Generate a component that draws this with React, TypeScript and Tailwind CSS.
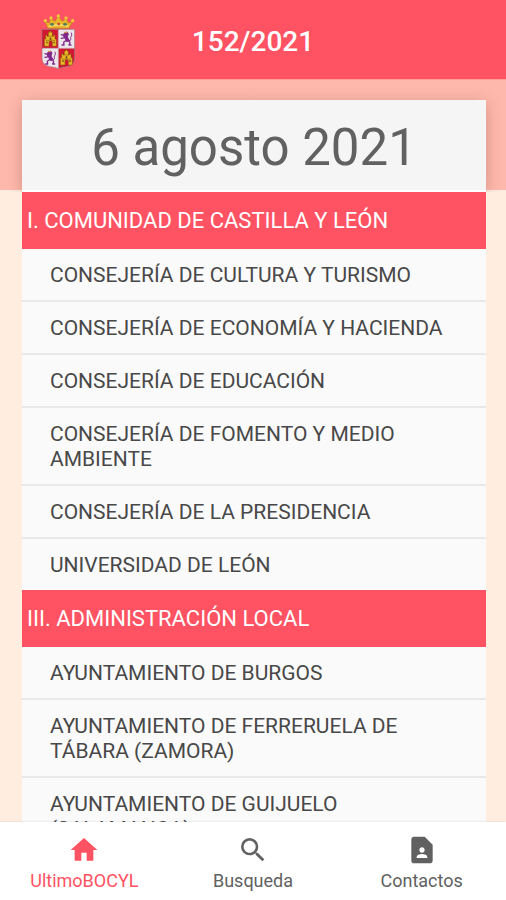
import { useState } from "react";
import type { ReactNode } from "react";

type Section = { title: string; entries: string[] };

const sections: Section[] = [
  {
    title: "I. COMUNIDAD DE CASTILLA Y LEÓN",
    entries: [
      "CONSEJERÍA DE CULTURA Y TURISMO",
      "CONSEJERÍA DE ECONOMÍA Y HACIENDA",
      "CONSEJERÍA DE EDUCACIÓN",
      "CONSEJERÍA DE FOMENTO Y MEDIO AMBIENTE",
      "CONSEJERÍA DE LA PRESIDENCIA",
      "UNIVERSIDAD DE LEÓN",
    ],
  },
  {
    title: "III. ADMINISTRACIÓN LOCAL",
    entries: [
      "AYUNTAMIENTO DE BURGOS",
      "AYUNTAMIENTO DE FERRERUELA DE TÁBARA (ZAMORA)",
      "AYUNTAMIENTO DE GUIJUELO (SALAMANCA)",
    ],
  },
];

function Castle({ x, y }: { x: number; y: number }) {
  return (
    <g transform={`translate(${x} ${y})`}>
      <path
        d="M0 46V24h4V12h4v4h4V4h4V0h4v4h4v12h4v-4h4v12h4v22H24V34a4 4 0 0 0-10 0v12z"
        fill="#e8b923"
        stroke="#7d4a14"
        strokeWidth="1.5"
      />
      <path d="M4 28h28M12 16h12" stroke="#9a6413" strokeWidth="2" />
      <path d="M6 32h4v5H6zM27 32h4v5h-4zM16 20h5v6h-5z" fill="#6d3f24" />
    </g>
  );
}

function Lion({ x, y }: { x: number; y: number }) {
  return (
    <g transform={`translate(${x} ${y})`} fill="none" stroke="#80298a" strokeLinecap="round" strokeLinejoin="round">
      <path d="M12 7l8-4 4 6-3 9 6 11-8 3-5-10-4-6z" fill="#80298a" strokeWidth="3" />
      <path d="M13 14L3 11M14 20L3 22M18 28l-8 6 1 8H5M25 28l4 7-3 7h6" strokeWidth="4" />
      <path d="M27 30c8-2 2-9 5-13 2-3 4-7 1-11" strokeWidth="3" />
      <path d="M13 4h7" stroke="#d79c2c" strokeWidth="3" />
    </g>
  );
}

function Crest() {
  return (
    <svg viewBox="60 38 108 166" className="h-14 w-9" role="img" aria-label="Junta de Castilla y León">
      <path
        d="M84 80l-9-20 12 4 6-13 12 8 10-17 11 17 12-8 7 13 13-4-12 20z"
        fill="#eab52b"
        stroke="#b97b20"
        strokeWidth="2"
      />
      <g fill="#f2c83a">
        <circle cx="76" cy="57" r="5" />
        <circle cx="93" cy="49" r="5" />
        <circle cx="115" cy="43" r="5" />
        <circle cx="138" cy="49" r="5" />
        <circle cx="158" cy="57" r="5" />
      </g>
      <path d="M86 74q30-8 59 0" fill="none" stroke="#fae07c" strokeWidth="4" />
      <g fill="#4e7a56">
        <ellipse cx="96" cy="68" rx="6" ry="4" />
        <ellipse cx="135" cy="68" rx="6" ry="4" />
      </g>
      <circle cx="116" cy="67" r="4" fill="#bd442e" />
      <path d="M66 83h98v87q0 20-23 25-17 1-26 6-9-5-26-6-23-5-23-25z" fill="#ece6eb" />
      <path d="M66 83h49v57H66zM115 140h49v30q0 20-23 25-17 1-26 6z" fill="#d31632" />
      <path d="M115 83v118M66 140h98" stroke="#c5aab1" strokeWidth="2" />
      <path
        d="M66 83h98v87q0 20-23 25-17 1-26 6-9-5-26-6-23-5-23-25z"
        fill="none"
        stroke="#97717a"
        strokeWidth="2"
      />
      <Castle x={73} y={88} />
      <Lion x={121} y={88} />
      <Lion x={72} y={145} />
      <Castle x={121} y={144} />
    </svg>
  );
}

type Tab = { id: string; label: string; icon: ReactNode };

const tabs: Tab[] = [
  { id: "ultimo", label: "UltimoBOCYL", icon: <path d="M10 20v-6h4v6h5v-8h3L12 3 2 12h3v8z" /> },
  {
    id: "busqueda",
    label: "Busqueda",
    icon: (
      <path d="M15.5 14h-.79l-.28-.27A6.471 6.471 0 0 0 16 9.5 6.5 6.5 0 1 0 9.5 16c1.61 0 3.09-.59 4.23-1.57l.27.28v.79l5 4.99L20.49 19l-4.99-5zm-6 0C7.01 14 5 11.99 5 9.5S7.01 5 9.5 5 14 7.01 14 9.5 11.99 14 9.5 14z" />
    ),
  },
  {
    id: "contactos",
    label: "Contactos",
    icon: (
      <path d="M14 2H6c-1.1 0-2 .9-2 2v16c0 1.1.89 2 1.99 2H18c1.1 0 2-.9 2-2V8l-6-6zm-2 8c1.1 0 2 .9 2 2s-.9 2-2 2-2-.9-2-2 .9-2 2-2zm4 8H8v-.57c0-.81.48-1.53 1.22-1.85a6.95 6.95 0 0 1 5.56 0A2.01 2.01 0 0 1 16 17.43V18z" />
    ),
  },
];

export default function App() {
  const [active, setActive] = useState("ultimo");

  return (
    <div className="flex h-screen flex-col bg-[#ffeee0] font-[Roboto,sans-serif]">
      <header className="grid h-20 shrink-0 grid-cols-[1fr_auto_1fr] items-center border-b border-[#ffa197] bg-[#ff5262] px-10 pt-1">
        <Crest />
        <h1 className="text-[28px] font-medium leading-8 text-white">152/2021</h1>
      </header>

      <main className="min-h-0 flex-1 overflow-y-auto bg-linear-to-b from-[#ffb9ac] from-[110px] to-[#ffeee0] to-[110px] pr-5 pl-[22px] pt-5 [scrollbar-width:none]">
        <div className="bg-[#fafafa]">
          <h2 className="border-b-2 border-white bg-[#f5f5f5] pt-5 pb-[14px] text-center text-[51px] leading-14 text-[#616161] shadow-[0_3px_14px_rgba(80,30,30,0.26)] [clip-path:inset(-20px_-20px_0_-20px)]">
            6 agosto 2021
          </h2>
          {sections.map((section) => (
            <section key={section.title}>
              <h3 className="bg-[#ff5262] px-[5px] pt-[17px] pb-4 text-[22px] leading-6 text-white">{section.title}</h3>
              <ul className="divide-y-2 divide-[#e9e9e9]">
                {section.entries.map((entry) => (
                  <li key={entry}>
                    <a href="#" className="block px-7 pt-[14px] pb-3 text-[21px] leading-[25px] text-[#484848]">
                      {entry}
                    </a>
                  </li>
                ))}
              </ul>
            </section>
          ))}
        </div>
      </main>

      <nav className="grid h-[78px] shrink-0 grid-cols-3 bg-white shadow-[0_0_2px_rgba(0,0,0,0.15)]">
        {tabs.map((tab) => (
          <button
            key={tab.id}
            type="button"
            onClick={() => setActive(tab.id)}
            className={`flex flex-col items-center gap-[3px] pt-3 text-[18px] leading-6 ${
              active === tab.id ? "text-[#ff5262]" : "text-[#616161]"
            }`}
          >
            <svg viewBox="0 0 24 24" className="size-8 shrink-0" fill="currentColor" aria-hidden="true">
              {tab.icon}
            </svg>
            {tab.label}
          </button>
        ))}
      </nav>
    </div>
  );
}
